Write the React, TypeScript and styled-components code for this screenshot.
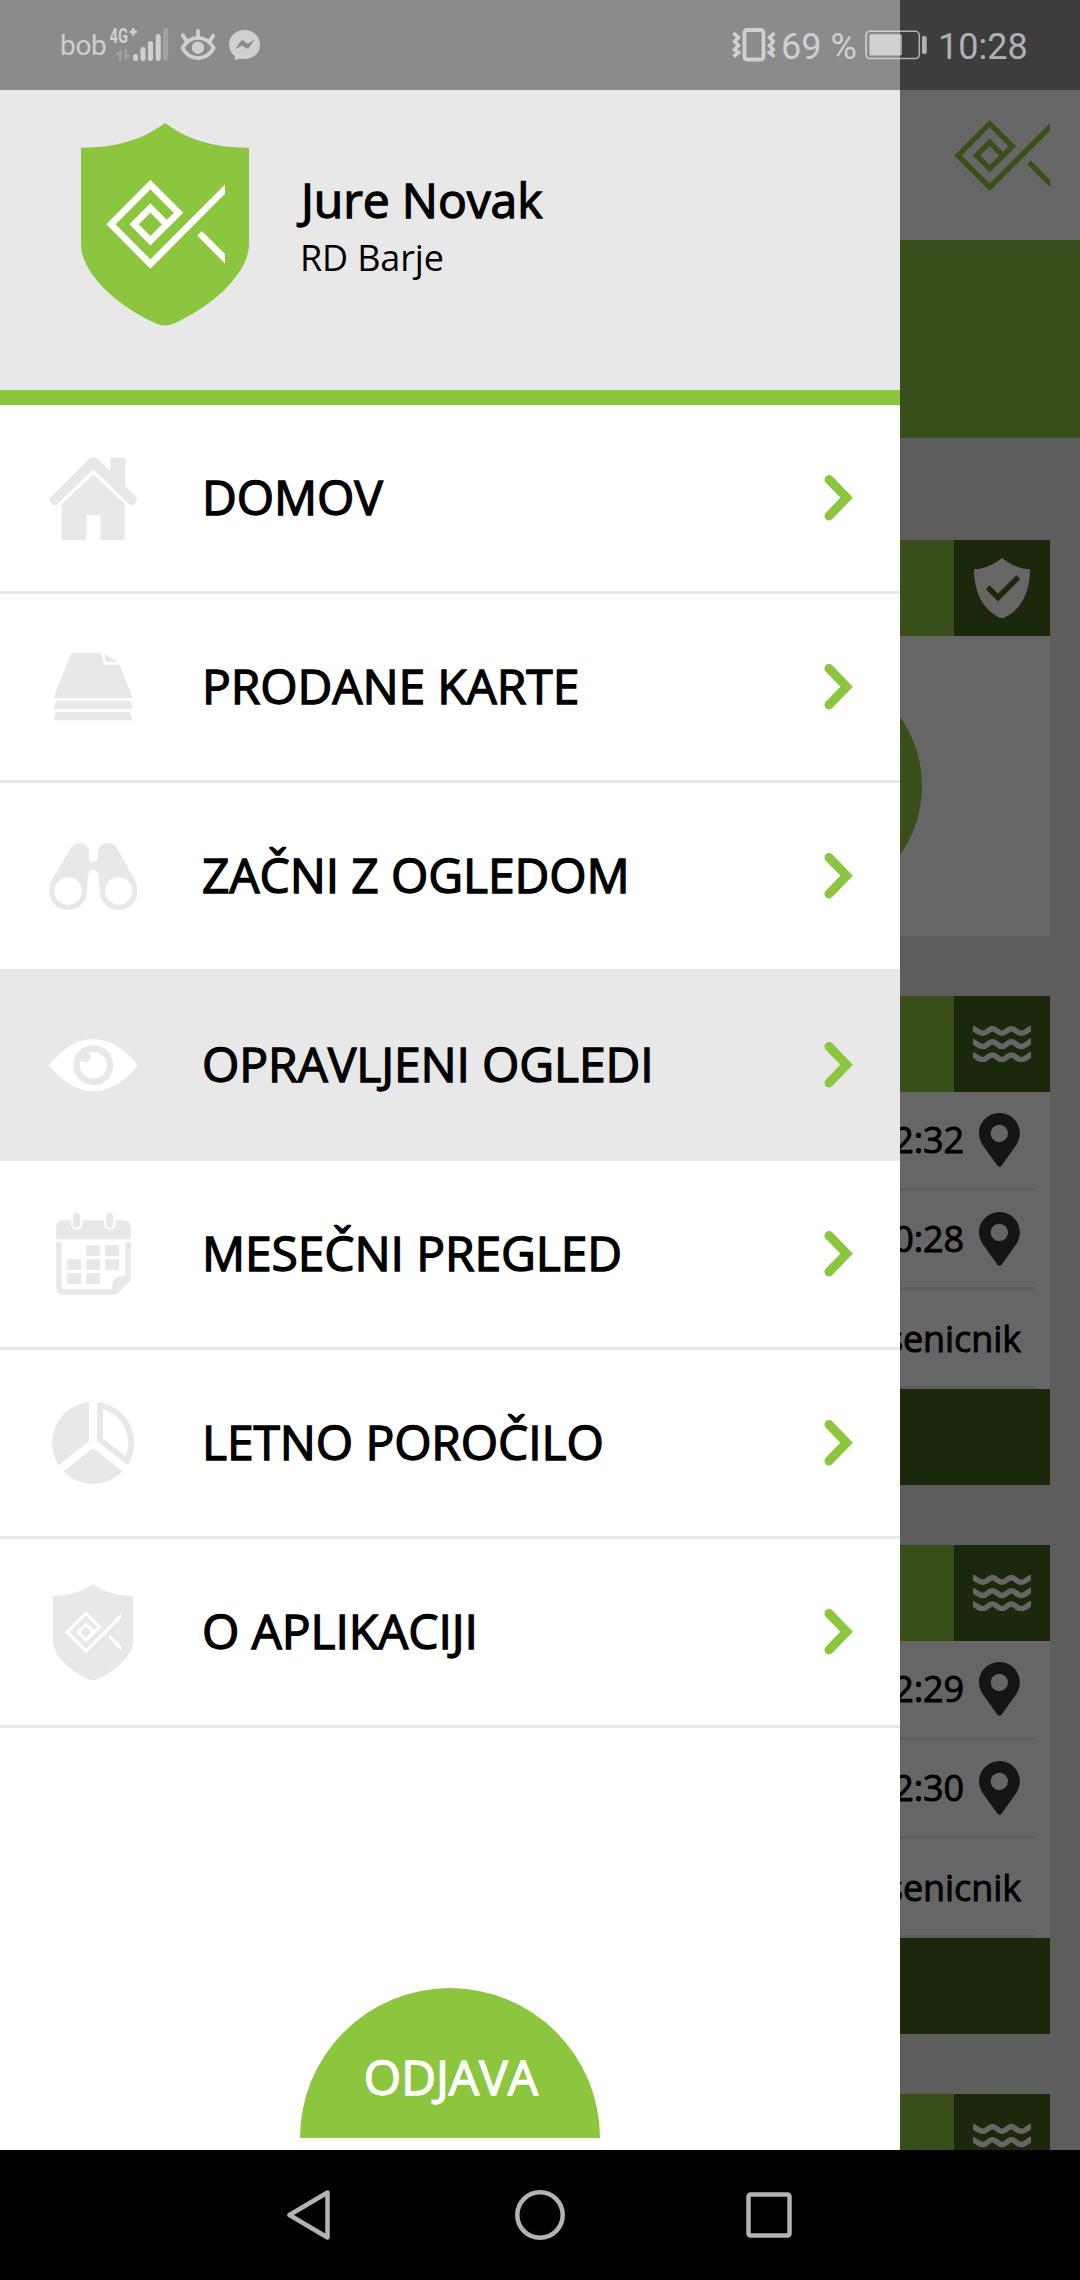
import React from "react";
import styled, { createGlobalStyle } from "styled-components";

const GREEN = "#8cc63f";
const DARK_GREEN = "#46641c";
const GREY = "#e8e8e8";

const GlobalStyle = createGlobalStyle`
  body { margin: 0; background: #000; }
  *, *::before, *::after { box-sizing: border-box; }
  svg { display: block; flex: none; }
`;

const Screen = styled.div`
  width: 1080px;
  height: 2280px;
  display: flex;
  flex-direction: column;
  overflow: hidden;
  font-family: "Open Sans", "Noto Sans", sans-serif;
  color: #000;
`;

const Viewport = styled.div`
  position: relative;
  height: 2150px;
  overflow: hidden;
`;

/* ---------- page behind the drawer ---------- */

const Page = styled.main`
  height: 100%;
  background: ${GREY};
  overflow: hidden;
`;

const TopBar = styled.header`
  height: 240px;
  padding: 120px 30px 0;
  display: flex;
  justify-content: flex-end;
  background: #fff;
`;

const Banner = styled.div`
  height: 198px;
  background: ${GREEN};
`;

const Cards = styled.div`
  display: flex;
  flex-direction: column;
  gap: 60px;
  padding: 102px 30px 0;
`;

const Card = styled.section`
  flex: none;
  background: #fff;
`;

const CardHead = styled.div`
  height: 96px;
  display: flex;
  justify-content: flex-end;
  background: ${GREEN};
`;

const CardBadge = styled.div`
  width: 96px;
  height: 96px;
  display: flex;
  align-items: center;
  justify-content: center;
  background: ${DARK_GREEN};
`;

const CirclePanel = styled.div`
  height: 300px;
  padding-right: 128px;
  display: flex;
  align-items: center;
  justify-content: flex-end;
`;

const Circle = styled.div`
  width: 240px;
  height: 240px;
  border-radius: 50%;
  background: ${GREEN};
`;

const Rows = styled.div`
  padding: 0 15px;
`;

const InfoRow = styled.div<{ $textOnly?: boolean }>`
  height: 99px;
  padding: ${(p) => (p.$textOnly ? "2px 14px 0 0" : "0 15px 0 0")};
  display: flex;
  align-items: center;
  justify-content: flex-end;
  gap: 15px;
  border-bottom: 3px solid ${GREY};
  font-size: 36px;
  line-height: 48px;
  letter-spacing: -0.1px;
  -webkit-text-stroke: 0.9px #000;
`;

const CardFoot = styled.div`
  height: 96px;
  background: ${DARK_GREEN};
`;

const Scrim = styled.div`
  position: absolute;
  inset: 0;
  background: rgba(0, 0, 0, 0.6);
`;

/* ---------- drawer ---------- */

const Drawer = styled.aside`
  position: absolute;
  top: 0;
  left: 0;
  width: 900px;
  height: 2150px;
  display: flex;
  flex-direction: column;
  background: #fff;
`;

const Profile = styled.div`
  height: 405px;
  padding: 123px 0 0 81px;
  display: flex;
  gap: 51px;
  background: ${GREY};
  border-bottom: 15px solid ${GREEN};
`;

const ProfileText = styled.div`
  padding-top: 44px;
`;

const UserName = styled.div`
  padding-left: 1px;
  font-size: 48px;
  line-height: 66px;
  letter-spacing: -0.1px;
  -webkit-text-stroke: 1.3px #000;
`;

const Club = styled.div`
  padding-top: 1px;
  font-size: 36px;
  line-height: 48px;
  letter-spacing: -0.15px;
`;

const MenuRow = styled.div<{ $active?: boolean }>`
  height: 189px;
  display: flex;
  align-items: center;
  padding-right: 47px;
  border-bottom: 3px solid ${GREY};
  background: ${(p) => (p.$active ? GREY : "#fff")};
  color: ${(p) => (p.$active ? "#fff" : GREY)};
  box-shadow: ${(p) => (p.$active ? `0 -3px 0 ${GREY}` : "none")};
`;

const IconCell = styled.div`
  width: 186px;
  display: flex;
  justify-content: center;
`;

const MenuLabel = styled.div`
  flex: 1;
  padding: 0 0 2px 16px;
  font-size: 48px;
  line-height: 66px;
  letter-spacing: -0.12px;
  color: #000;
  -webkit-text-stroke: 1.3px #000;
`;

const DrawerFoot = styled.div`
  flex: 1;
  display: flex;
  align-items: flex-end;
  justify-content: center;
  padding-bottom: 12px;
`;

const Logout = styled.div`
  width: 300px;
  height: 150px;
  padding: 56px 0 0 2px;
  border-radius: 150px 150px 0 0;
  background: ${GREEN};
  color: #fff;
  font-size: 48px;
  line-height: 66px;
  text-align: center;
  -webkit-text-stroke: 1.3px #fff;
`;

/* ---------- system bars ---------- */

const StatusBar = styled.div`
  position: absolute;
  top: 0;
  left: 0;
  width: 1080px;
  height: 90px;
  padding: 0 54px 0 60px;
  display: flex;
  align-items: center;
  justify-content: space-between;
  background: rgba(0, 0, 0, 0.4);
  color: rgba(255, 255, 255, 0.6);
  font-family: Roboto, sans-serif;
`;

const StatusGroup = styled.div`
  display: flex;
  align-items: center;
`;

const Carrier = styled.span`
  width: 45px;
  margin-right: 5px;
  padding-top: 2px;
  font-size: 28px;
  line-height: 32px;
  letter-spacing: -0.3px;
`;

const StatusText = styled.span<{ $w: number }>`
  width: ${(p) => p.$w}px;
  font-size: 36px;
  line-height: 44px;
  padding-top: 3px;
  white-space: nowrap;
`;

const Gap = styled.span<{ $w: number }>`
  width: ${(p) => p.$w}px;
`;

const NavBar = styled.nav`
  height: 130px;
  display: flex;
  align-items: center;
  padding-left: 287px;
  background: #000;
`;

/* ---------- drawings ---------- */

const FISH =
  "M1190 363 L990 563 L895 467.5 L990 372 L1058 440 L990 507 L950.5 467.5 L990 428 L1029 467.5 M1108.500 489 L1190 570.5";

const Fish = ({ w, h, x, y, color }: { w: number; h: number; x?: number; y?: number; color: string }) => (
  <svg x={x} y={y} width={w} height={h} viewBox="883 361 287 214" preserveAspectRatio="none">
    <path d={FISH} fill="none" stroke={color} strokeWidth="16" />
  </svg>
);

const Shield = ({ w, h, fill, mark }: { w: number; h: number; fill: string; mark: string }) => (
  <svg width={w} height={h} viewBox="0 0 168 203" preserveAspectRatio="none">
    <path
      fill={fill}
      d="M84 0 C107 17 134 25 168 24.700 V121 C168 150 132 183 94 200 Q84 205 74 200 C36 183 0 150 0 121 V24.700 C34 25 61 17 84 0Z"
    />
    <Fish x={25} y={57} w={119} h={89} color={mark} />
  </svg>
);

const HomeIcon = () => (
  <svg width="88.700" height="83" viewBox="86 108 266 249" fill="currentColor">
    <path d="M208 112 Q219 105 230 112 L270 151 V116 Q270 110 276 110 H309 Q315 110 315 116 V195 L350 230 Q352 234 350 238 L341 251 Q335 257 329 252 L219 145 L109 252 Q103 257 97 251 L88 239 Q86 235 88 231Z" />
    <path d="M219 160 L313 249 V348 Q313 357 304 357 H240 V282 H198 V357 H132 Q124 357 124 348 V249Z" />
  </svg>
);

const CardsIcon = () => (
  <svg width="78" height="67.700" viewBox="102 699 234 203" fill="currentColor">
    <path d="M154 699 H242 L253 735 H299 L336 829 V834 H102 V829Z M251 701 L293 725 H259Z M108 843 H330 L336 862 V867 H102 V862Z M108 876 H330 L336 895 V901 H102 V895Z" />
  </svg>
);

const BinocularsIcon = () => (
  <svg width="88.700" height="67" viewBox="86 1266 266 201" fill="currentColor">
    <path
      fillRule="evenodd"
      d="M206 1314 L213 1322 H226 L233 1314 V1294 C233 1278 247 1266 262 1266 C275 1266 285 1273 291 1283 L343 1376 Q352 1392 352 1410 A57 57 0 0 1 238 1410 L235 1359 L225 1347 H213 L203 1360 L200 1410 A57 57 0 0 1 86 1410 Q86 1392 96 1374 L150 1283 C156 1273 166 1266 178 1266 C194 1266 206 1278 206 1294Z M102 1410 a41.500 41.500 0 1 0 83 0 a41.500 41.500 0 1 0 -83 0Z M254 1410 a41 41 0 1 0 82 0 a41 41 0 1 0 -82 0Z"
    />
  </svg>
);

const EyeIcon = () => (
  <svg width="88.700" height="52.300" viewBox="86 236 266 157" fill="currentColor">
    <path d="M88 311 C128 264 170 236 219 236 C268 236 310 264 350 311 Q352 314.500 350 318 C310 365 268 393 219 393 C170 393 128 365 88 318 Q86 314.500 88 311Z" />
    <circle cx="219" cy="314.500" r="60" fill={GREY} />
    <circle cx="219" cy="314.500" r="40" />
    <circle cx="195" cy="290" r="15.500" fill={GREY} />
  </svg>
);

const CalendarIcon = () => (
  <svg width="75" height="82" viewBox="107.500 758 225 246" fill="currentColor">
    <path d="M108 837 V804 Q108 780 132 780 H153 V791 a17 17 0 0 0 34 0 V780 H252 V791 a17 17 0 0 0 34 0 V780 H308 Q332 780 332 804 V837Z" />
    <rect x="159" y="758" width="21" height="44" rx="10.500" />
    <rect x="258" y="758" width="21" height="44" rx="10.500" />
    <path d="M108 846 H124 V981 Q124 987 130 987 H276 V980 C276 960 288 948 305 948 H309 Q316 948 316 940 V846 H332 V960 L291 1001 Q287 1004 282 1004 H131 Q108 1004 108 981Z" />
    <path d="M198 855h42v32h-42z M255 855h42v32h-42z M141 897h42v32h-42z M198 897h42v32h-42z M255 897h42v32h-42z M141 939h42v32h-42z M198 939h42v32h-42z" />
  </svg>
);

const PieIcon = () => (
  <svg width="82" height="82.300" viewBox="96 185 246 247" fill="currentColor">
    <path d="M207 185 V303 L116 375 A123.500 123.500 0 0 1 207 185Z" />
    <path d="M219 323 L308 393 A123.500 123.500 0 0 1 130 393Z" />
    <path
      fillRule="evenodd"
      d="M231 185 A123.500 123.500 0 0 1 323 375 L231 303Z M249 207 V294 L317 348 A106 106 0 0 0 249 207Z"
    />
  </svg>
);

const AppIcon = () => <Shield w={80} h={96.500} fill={GREY} mark="#fff" />;

const Chevron = () => (
  <svg width="29.300" height="47.300" viewBox="131 183 88 142">
    <path d="M146 199.500 L199 254 L146 309" fill="none" stroke={GREEN} strokeWidth="27" strokeLinecap="round" />
  </svg>
);

const CheckShield = () => (
  <svg width="56" height="60.600" viewBox="582 400 168 176" preserveAspectRatio="none">
    <path
      fill="#fff"
      d="M666 400 C690 419 716 431 750 433 C750 503 720 554 671 574 Q666 577 661 574 C612 554 582 503 582 433 C616 431 642 419 666 400Z"
    />
    <path d="M623 485 L654 515 L715 456" fill="none" stroke={DARK_GREEN} strokeWidth="16" />
  </svg>
);

const WAVE = "M573 141 L579 145 C592 150 596 159 609 159 S624 145 637 145 S653 159 666 159 S681 145 694 145 S710 159 723 159 S740 150 751 145 L757 141";

const Waves = () => (
  <svg width="57.700" height="36.700" viewBox="579 137 173 110">
    <g fill="none" stroke="#fff" strokeWidth="16.500">
      <path d={WAVE} />
      <path d={WAVE} transform="translate(0 39.500)" />
      <path d={WAVE} transform="translate(0 79)" />
    </g>
  </svg>
);

const Pin = () => (
  <svg width="41" height="54" viewBox="597 398 123 162">
    <path
      fill="#343434"
      fillRule="evenodd"
      d="M658.500 398 C692 398 719.500 425 719.500 459 C719.500 472 716 483 709 494 L664 557 Q658.500 562 653 557 L608 494 C601 483 597 472 597 459 C597 425 625 398 658.500 398Z M632 459 a26 26 0 1 0 52 0 a26 26 0 1 0 -52 0Z"
    />
  </svg>
);

const Signal = () => (
  <svg width="58" height="34" viewBox="110 28 58 34" fill="#fff" overflow="visible">
    <g fillOpacity="0.6">
      <text x="109.500" y="43" fontSize="20.500" fontWeight="700" textLength="18.500" lengthAdjust="spacingAndGlyphs">
        4G
      </text>
      <path d="M132 28 h2.500 v2.500 h2.500 v2.500 h-2.500 v2.500 h-2.500 v-2.500 h-2.500 v-2.500 h2.500z" />
      <rect x="133" y="54" width="5" height="7" rx="2.500" />
      <rect x="140.500" y="47" width="5" height="14" rx="2.500" />
      <rect x="148" y="41" width="5" height="20" rx="2.500" />
      <rect x="155.700" y="34" width="5" height="27" rx="2.500" />
    </g>
    <g fillOpacity="0.2">
      <rect x="163.200" y="28" width="5" height="33" rx="2.500" />
      <path d="M115 55 L121.500 49 V61 H119 V55Z M131 55 L124.500 61 V49 H127 V55Z" />
    </g>
  </svg>
);

const LashEye = () => (
  <svg width="36" height="32" viewBox="180 30 36 32" fill="none" stroke="currentColor" strokeWidth="3.800" strokeLinecap="round">
    <path d="M182.500 49 C190 35.500 206 35.500 213.700 49 C206 62.500 190 62.500 182.500 49Z M198 32 V36.600 M182.800 36.300 L185.600 40.600 M213.200 36.700 L210.600 40.800" strokeLinejoin="round" />
    <circle cx="198" cy="48.700" r="6.200" fill="currentColor" stroke="none" />
  </svg>
);

const Messenger = () => (
  <svg width="32" height="31" viewBox="229 31 32 31" fill="currentColor">
    <path
      fillRule="evenodd"
      d="M244.500 31 C253.500 31 260 37.500 260 45.500 C260 53.800 253.500 60 244.500 60 C242.500 60 241 59.700 240 59.400 L235.300 61.300 Q234.800 60 234.700 57 C231 54 229 50.500 229 45.500 C229 37.500 235.500 31 244.500 31Z M235.500 50 L240.500 42.500 Q242 40.500 244 42 L247 44.200 Q247.700 44.700 248.500 44.200 L254.500 40.700 L249.200 48.500 Q247.700 50.400 245.700 49 L242.800 47 Q242 46.500 241.300 47Z"
    />
  </svg>
);

const Vibrate = () => (
  <svg width="43" height="34" viewBox="732 29 43 34" fill="none" stroke="currentColor">
    <rect x="744.500" y="31" width="19" height="29.500" rx="2.500" strokeWidth="3.800" />
    <path
      strokeWidth="3.600"
      d="M733.500 34 L738.500 38.500 L734.500 42.500 L738.500 46.500 L734.500 50.500 L738.500 53.500 L733.500 57.500 M774.500 34 L769.500 38.500 L773.500 42.500 L769.500 46.500 L773.500 50.500 L769.500 53.500 L774.500 57.500"
    />
  </svg>
);

const Battery = () => (
  <svg width="62" height="30" viewBox="865 30.500 62 30" fill="currentColor">
    <rect x="866" y="31.800" width="53.300" height="27.200" rx="4" fill="none" stroke="currentColor" strokeWidth="1.600" />
    <rect x="869.500" y="34.800" width="32.300" height="21.200" rx="1.500" />
    <rect x="922" y="36.500" width="4.700" height="18" rx="1.800" />
  </svg>
);

/* ---------- data ---------- */

const menu: { label: string; Icon: () => React.ReactElement; active?: boolean }[] = [
  { label: "DOMOV", Icon: HomeIcon },
  { label: "PRODANE KARTE", Icon: CardsIcon },
  { label: "ZAČNI Z OGLEDOM", Icon: BinocularsIcon },
  { label: "OPRAVLJENI OGLEDI", Icon: EyeIcon, active: true },
  { label: "MESEČNI PREGLED", Icon: CalendarIcon },
  { label: "LETNO POROČILO", Icon: PieIcon },
  { label: "O APLIKACIJI", Icon: AppIcon },
];

const visits = [
  { from: "12:32", to: "10:28", by: "Jesenicnik" },
  { from: "12:29", to: "12:30", by: "Jesenicnik" },
];

const VisitHead = () => (
  <CardHead>
    <CardBadge>
      <Waves />
    </CardBadge>
  </CardHead>
);

export default function App() {
  return (
    <>
      <GlobalStyle />
      <Screen>
        <Viewport>
          <Page>
            <TopBar>
              <Fish w={95.700} h={71.300} color={GREEN} />
            </TopBar>
            <Banner />
            <Cards>
              <Card>
                <CardHead>
                  <CardBadge>
                    <CheckShield />
                  </CardBadge>
                </CardHead>
                <CirclePanel>
                  <Circle />
                </CirclePanel>
              </Card>
              {visits.map((v) => (
                <Card key={v.from}>
                  <VisitHead />
                  <Rows>
                    <InfoRow>
                      {v.from}
                      <Pin />
                    </InfoRow>
                    <InfoRow>
                      {v.to}
                      <Pin />
                    </InfoRow>
                    <InfoRow $textOnly>{v.by}</InfoRow>
                  </Rows>
                  <CardFoot />
                </Card>
              ))}
              <Card>
                <VisitHead />
              </Card>
            </Cards>
          </Page>
          <Scrim />
          <Drawer>
            <Profile>
              <Shield w={168} h={203} fill={GREEN} mark="#fff" />
              <ProfileText>
                <UserName>Jure Novak</UserName>
                <Club>RD Barje</Club>
              </ProfileText>
            </Profile>
            {menu.map(({ label, Icon, active }) => (
              <MenuRow key={label} $active={active}>
                <IconCell>
                  <Icon />
                </IconCell>
                <MenuLabel>{label}</MenuLabel>
                <Chevron />
              </MenuRow>
            ))}
            <DrawerFoot>
              <Logout>ODJAVA</Logout>
            </DrawerFoot>
          </Drawer>
          <StatusBar>
            <StatusGroup>
              <Carrier>bob</Carrier>
              <Signal />
              <Gap $w={12} />
              <LashEye />
              <Gap $w={13} />
              <Messenger />
            </StatusGroup>
            <StatusGroup>
              <Vibrate />
              <Gap $w={6} />
              <StatusText $w={75}>69 %</StatusText>
              <Gap $w={9} />
              <Battery />
              <Gap $w={11} />
              <StatusText $w={88}>10:28</StatusText>
            </StatusGroup>
          </StatusBar>
        </Viewport>
        <NavBar>
          <svg width="43" height="50" viewBox="287 2190 43 50" fill="none" stroke="#b3b3b3" strokeWidth="4.500" strokeLinejoin="round">
            <path d="M289.500 2215 L327.500 2192.500 V2237.500Z" />
          </svg>
          <Gap $w={185} />
          <svg width="50" height="50" viewBox="0 0 50 50" fill="none" stroke="#b3b3b3" strokeWidth="4.500">
            <circle cx="25" cy="25" r="22.700" />
          </svg>
          <Gap $w={181} />
          <svg width="46" height="46" viewBox="0 0 46 46" fill="none" stroke="#b3b3b3" strokeWidth="4.500">
            <rect x="2.500" y="2.500" width="41" height="41" rx="2" />
          </svg>
        </NavBar>
      </Screen>
    </>
  );
}
